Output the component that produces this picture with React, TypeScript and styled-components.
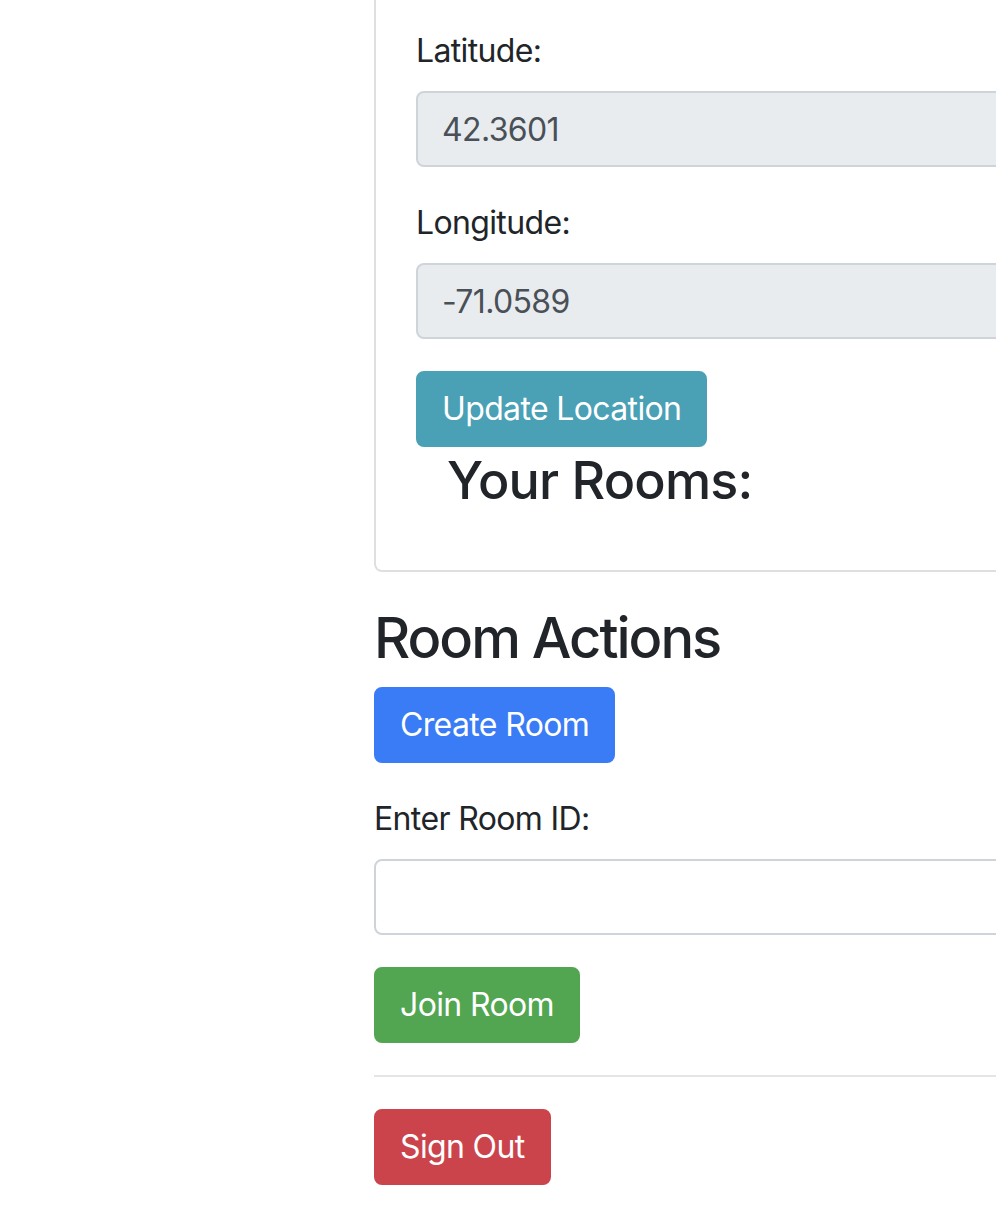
import React from "react";
import styled, { createGlobalStyle } from "styled-components";

const Global = createGlobalStyle`
  html, body { margin: 0; padding: 0; background: #fff; overflow: hidden; }
  body {
    font-family: Inter, "Noto Sans", "Liberation Sans", sans-serif;
    color: #212529;
    font-size: 32px;
    line-height: 1.5;
    letter-spacing: -0.02em;
  }
  * { box-sizing: border-box; }
`;

const Page = styled.div`
  width: 1000px;
  margin-left: 374px;
  display: flex;
  flex-direction: column;
`;

const Card = styled.section`
  border: 2px solid #dfdfdf;
  border-top: none;
  border-radius: 0 0 8px 8px;
  padding: 27px 40px 40px;
  display: flex;
  flex-direction: column;
`;

const Field = styled.div`
  display: flex;
  flex-direction: column;
  margin-bottom: 32px;
`;

const Label = styled.label`
  display: block;
  margin-bottom: 16px;
  font-size: 32px;
  line-height: 48px;
`;

const Input = styled.input<{ $readOnly?: boolean }>`
  display: block;
  width: 100%;
  height: 76px;
  padding: 12px 24px;
  font-family: inherit;
  font-size: 32px;
  line-height: 48px;
  letter-spacing: -0.02em;
  color: #495057;
  background: ${(p) => (p.$readOnly ? "#e9ecef" : "#fff")};
  border: 2px solid #ced4da;
  border-radius: 8px;
  outline: none;
`;

const Button = styled.button<{ $bg: string }>`
  align-self: flex-start;
  display: inline-block;
  padding: 12px 24px;
  font-family: inherit;
  font-size: 32px;
  line-height: 48px;
  letter-spacing: -0.02em;
  font-weight: 400;
  color: #fff;
  background: ${(p) => p.$bg};
  border: 2px solid ${(p) => p.$bg};
  border-radius: 8px;
  cursor: pointer;
`;

const RoomsTitle = styled.h3`
  margin: 0 0 16px 31px;
  font-size: 52px;
  line-height: 67px;
  font-weight: 500;
  letter-spacing: -0.015em;
`;

const SectionTitle = styled.h2`
  margin: 30px 0 13px;
  font-size: 56px;
  line-height: 72px;
  font-weight: 500;
  letter-spacing: -2px;
`;

const Divider = styled.hr`
  margin: 32px 0;
  border: 0;
  border-top: 2px solid #e5e5e5;
`;

const Spacer = styled.div`
  margin-bottom: 32px;
  display: flex;
  flex-direction: column;
`;

export default function App() {
  return (
    <>
      <Global />
      <Page>
        <Card>
          <Field>
            <Label>Latitude:</Label>
            <Input $readOnly readOnly value="42.3601" />
          </Field>
          <Field>
            <Label>Longitude:</Label>
            <Input $readOnly readOnly value="-71.0589" />
          </Field>
          <Button $bg="#4aa0b5">Update Location</Button>
          <RoomsTitle>Your Rooms:</RoomsTitle>
        </Card>
        <SectionTitle>Room Actions</SectionTitle>
        <Spacer>
          <Button $bg="#3a7bf6">Create Room</Button>
        </Spacer>
        <Field>
          <Label>Enter Room ID:</Label>
          <Input />
        </Field>
        <Button $bg="#52a551">Join Room</Button>
        <Divider />
        <Button $bg="#cb444b">Sign Out</Button>
      </Page>
    </>
  );
}
